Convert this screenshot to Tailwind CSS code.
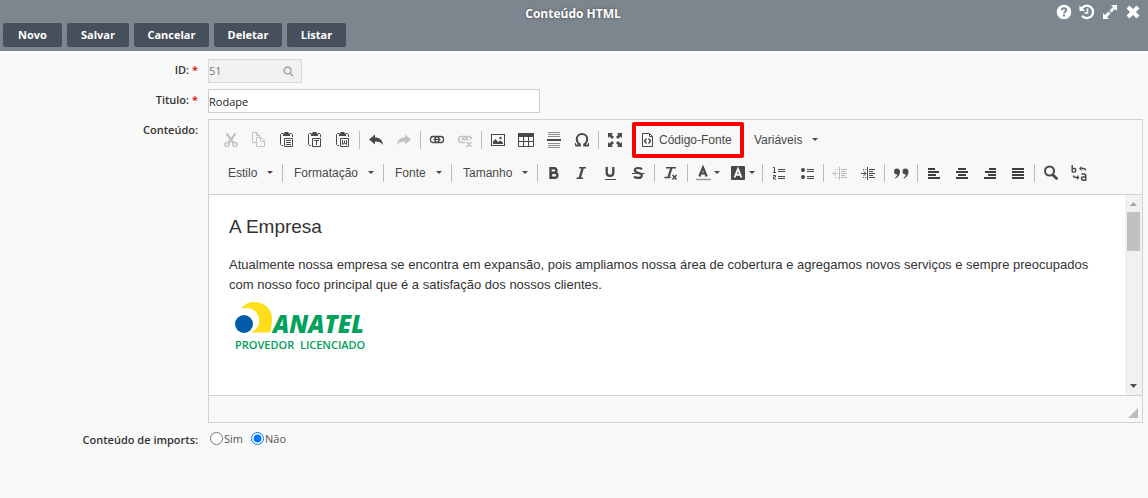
<!DOCTYPE html>
<html lang="pt-BR">
<head>
<meta charset="utf-8">
<meta name="viewport" content="width=device-width, initial-scale=1">
<title>Conteúdo HTML</title>
<script src="https://cdn.jsdelivr.net/npm/@tailwindcss/browser@4"></script>
</head>
<body class="min-h-screen bg-[#f9f9f9] font-['Open_Sans',sans-serif] text-[11px] text-[#333]">
<header class="relative bg-[#7d868f] px-[3px] pb-1">
  <h1 class="flex h-[23px] items-center justify-center pt-1 pr-0.5 text-xs font-bold text-white [text-shadow:0_0_3px_#444]">Conteúdo HTML</h1>
  <div class="absolute top-1 right-[7px] flex gap-[7px] text-white">
    <button type="button" aria-label="Ajuda" class="size-4"><svg viewBox="0 0 16 16" class="size-4"><circle cx="8" cy="8" r="7.300" fill="currentColor"/><path d="M5.800 6.200C5.900 4.800 6.800 4.200 8 4.200s2.300.7 2.300 1.900C10.300 7.700 8.100 7.600 8.100 9.300" fill="none" stroke="#7d868f" stroke-width="1.900"/><path d="M7 10.300h2.100v2H7z" fill="#7d868f"/></svg></button>
    <button type="button" aria-label="Histórico" class="size-4"><svg viewBox="0 0 16 16" class="size-4" fill="none" stroke="currentColor"><path d="M2.600 4.600A6.200 6.200 0 1 1 3 11.800" stroke-width="2.300"/><path d="M.500 1.500v5.500h5.500z" fill="currentColor" stroke="none"/><path d="M8.500 4.500V9H5.500" stroke-width="1.600"/></svg></button>
    <button type="button" aria-label="Expandir" class="size-4"><svg viewBox="0 0 16 16" class="size-4" fill="currentColor"><path d="M9 1h6v6l-2-2-3.500 3.500-2-2L11 3zM1 15V9l2 2 3.500-3.500 2 2L5 13l2 2z"/></svg></button>
    <button type="button" aria-label="Fechar" class="size-4"><svg viewBox="0 0 16 16" class="size-4" fill="none" stroke="currentColor" stroke-width="4"><path d="m3 3 10 10M13 3 3 13"/></svg></button>
  </div>
  <nav class="flex gap-[5px] text-[11px] font-bold text-white">
    <button type="button" class="h-6 w-[59px] rounded-xs bg-[#46505a]">Novo</button>
    <button type="button" class="h-6 w-[62px] rounded-xs bg-[#46505a]">Salvar</button>
    <button type="button" class="h-6 w-[75px] rounded-xs bg-[#46505a]">Cancelar</button>
    <button type="button" class="h-6 w-[68px] rounded-xs bg-[#46505a]">Deletar</button>
    <button type="button" class="h-6 w-[59px] rounded-xs bg-[#46505a]">Listar</button>
  </nav>
</header>

<form class="grid grid-cols-[198px_minmax(0,1fr)] gap-x-2.5 gap-y-1.5 pt-2 pr-[5px]">
  <label for="id" class="pt-[3px] text-right font-semibold">ID: <span class="text-[#e00]">*</span></label>
  <div class="flex h-6 w-[94px] items-center border border-[#d9d9d9] bg-[#f1f1f1] pr-[7px]">
    <input id="id" value="51" readonly class="w-full min-w-0 flex-1 text-[#777]">
    <svg viewBox="0 0 12 12" class="size-[11px] text-[#aaa]" fill="none" stroke="currentColor" stroke-width="1.700"><circle cx="5" cy="5" r="3.800"/><path d="m8 8 3 3"/></svg>
  </div>

  <label for="titulo" class="pt-[3px] text-right font-semibold">Titulo: <span class="text-[#e00]">*</span></label>
  <input id="titulo" value="Rodape" class="h-6 w-[332px] border border-[#ccc] bg-white text-[#222]">

  <div id="conteudo" class="pt-[3px] text-right font-semibold">Conteúdo:</div>
  <section aria-labelledby="conteudo" class="border border-[#d1d1d1] bg-[#f8f8f8] font-['Liberation_Sans',sans-serif]">
    <div class="flex flex-col gap-[5px] border-b border-[#d1d1d1] pt-1.5 pb-[7px] pl-2 text-xs text-[#484848]">
      <div class="flex h-7 items-center">
        <button type="button" aria-label="Recortar" class="flex h-7 w-7 items-center justify-center opacity-30"><svg viewBox="0 0 16 16" class="size-4" fill="none" stroke="currentColor"><path d="m3.500 1.500 7 9.500M12.500 1.500 5.500 11" stroke-width="2.400"/><circle cx="4" cy="12.500" r="2" stroke-width="1.500"/><circle cx="12" cy="12.500" r="2" stroke-width="1.500"/></svg></button>
        <button type="button" aria-label="Copiar" class="flex h-7 w-7 items-center justify-center opacity-30"><svg viewBox="0 0 16 16" class="size-4" fill="none" stroke="currentColor"><path d="M5 10.500H1.500v-10H6l2.500 2.500v2M5.500 5.500H10l3.500 3.500v5.500h-8zM9.500 5.500V9.500h4M5.500.500V3.500h3"/></svg></button>
        <button type="button" aria-label="Colar" class="flex h-7 w-7 items-center justify-center"><svg viewBox="0 0 16 16" class="size-4" fill="none" stroke="currentColor"><path d="M4 1.500H2.500l-1 1v10l1 1H4M11 1.500h1.500l1 1V5M5.500 6.500h8v8h-8z"/><path d="M4 1.500h1.500V0h4v1.500H11V4H4z" fill="currentColor" stroke="none"/><path d="M7 8.500h5M7 10.500h5M7 12.500h5"/></svg></button>
        <button type="button" aria-label="Colar como texto" class="flex h-7 w-7 items-center justify-center"><svg viewBox="0 0 16 16" class="size-4" fill="none" stroke="currentColor"><path d="M4 1.500H2.500l-1 1v10l1 1H4M11 1.500h1.500l1 1V5M5.500 6.500h8v8h-8z"/><path d="M4 1.500h1.500V0h4v1.500H11V4H4z" fill="currentColor" stroke="none"/><path d="M7 8.500h5M9.500 8.500V13"/></svg></button>
        <button type="button" aria-label="Colar do Word" class="flex h-7 w-7 items-center justify-center"><svg viewBox="0 0 16 16" class="size-4" fill="none" stroke="currentColor"><path d="M4 1.500H2.500l-1 1v10l1 1H4M11 1.500h1.500l1 1V5M5.500 6.500h8v8h-8z"/><path d="M4 1.500h1.500V0h4v1.500H11V4H4z" fill="currentColor" stroke="none"/><path d="M7.500 8v4.500l2-1.500 2 1.500V8M9.500 8.500v3"/></svg></button>
        <span class="mx-0.5 h-[18px] w-px bg-[#bcbcbc]"></span>
        <button type="button" aria-label="Desfazer" class="flex h-7 w-7 items-center justify-center"><svg viewBox="0 0 16 16" class="size-4" fill="currentColor"><path d="M7 2.500v3c5 0 7.500 2.500 8 7.500-1.500-2.500-4-3.500-8-3.500v3L1 7.500z"/></svg></button>
        <button type="button" aria-label="Refazer" class="flex h-7 w-7 items-center justify-center opacity-30"><svg viewBox="0 0 16 16" class="size-4" fill="currentColor"><path d="M9 2.500v3c-5 0-7.500 2.500-8 7.500 1.500-2.500 4-3.500 8-3.500v3l6-5z"/></svg></button>
        <span class="mx-0.5 h-[18px] w-px bg-[#bcbcbc]"></span>
        <button type="button" aria-label="Link" class="flex h-7 w-7 items-center justify-center"><svg viewBox="0 0 16 16" class="size-4" fill="none" stroke="currentColor" stroke-width="1.300"><rect x="1.500" y="4.500" width="8.500" height="6" rx="2.500"/><rect x="6" y="4.500" width="8.500" height="6" rx="2.500"/><path d="M4.500 7.500h7"/></svg></button>
        <button type="button" aria-label="Remover link" class="flex h-7 w-7 items-center justify-center opacity-30"><svg viewBox="0 0 16 16" class="size-4" fill="none" stroke="currentColor" stroke-width="1.400"><path d="M8 10.500H4.500a3 3 0 0 1 0-6H7a3 3 0 0 1 3 3M6 7.500a3 3 0 0 1 3-3h2.500a3 3 0 0 1 3 3M4.500 7.500h7M9.500 10l5 5M14.500 10l-5 5"/></svg></button>
        <span class="mx-0.5 h-[18px] w-px bg-[#bcbcbc]"></span>
        <button type="button" aria-label="Imagem" class="flex h-7 w-7 items-center justify-center"><svg viewBox="0 0 16 16" class="size-4" fill="currentColor"><path d="M1 2h14v12H1zM2 3v10h12V3z" fill-rule="evenodd"/><path d="M3 12V9.500L5.500 7l2.500 3 2-1.500 3 2V12z"/><circle cx="10.500" cy="6" r="1.200"/></svg></button>
        <button type="button" aria-label="Tabela" class="flex h-7 w-7 items-center justify-center"><svg viewBox="0 0 16 16" class="size-4" fill="none" stroke="currentColor"><path d="M.500 1.500h15v13H.500zM0 9.500h16M5.500 4v10M10.500 4v10"/><path d="M0 3h16" stroke-width="4"/></svg></button>
        <button type="button" aria-label="Linha horizontal" class="flex h-7 w-7 items-center justify-center"><svg viewBox="0 0 16 16" class="size-4" fill="none" stroke="currentColor"><path d="M2 .500h12M2 2.500h12M2 4.500h12M2 11.500h12M2 13.500h12M2 15.500h12" opacity=".6"/><path d="M1 8h14" stroke-width="2"/></svg></button>
        <button type="button" aria-label="Caractere especial" class="flex h-7 w-7 items-center justify-center"><svg viewBox="0 0 16 16" class="size-4" fill="none" stroke="currentColor" stroke-width="2"><path d="M1.500 13.500h4.300v-1.200C3.600 11 2.800 9.200 2.800 7c0-3 2.200-5 5.200-5s5.200 2 5.200 5c0 2.200-.8 4-3 5.300v1.200h4.300"/><path d="M1.500 11v3M14.500 11v3" stroke-width="1"/></svg></button>
        <span class="mx-0.5 h-[18px] w-px bg-[#bcbcbc]"></span>
        <button type="button" aria-label="Maximizar" class="flex h-7 w-7 items-center justify-center"><svg viewBox="0 0 16 16" class="size-4" fill="currentColor"><path d="M1 1h5L4.500 2.500 7 5 5 7 2.500 4.500 1 6zM15 1v5l-1.500-1.500L11 7 9 5l2.500-2.500L10 1zM1 15v-5l1.500 1.500L5 9l2 2-2.500 2.500L6 15zM15 15h-5l1.500-1.500L9 11l2-2 2.500 2.500L15 10z"/></svg></button>
        <button type="button" class="ml-[3px] flex h-9 w-28 items-center gap-1 rounded-xs border-4 border-[#f00] pl-[3px]"><svg viewBox="0 0 16 16" class="size-4 shrink-0" fill="none" stroke="currentColor"><path d="M3.500 1.500h7l3 3v10h-10zM10.500 1.500v3h3"/><path d="M7.500 6.500 5.500 9l2 2.500M9.500 6.500l2 2.500-2 2.500" stroke-width="1.400"/></svg>Código-Fonte</button>
        <button type="button" class="ml-2.5 flex h-7 items-center gap-2.5">Variáveis<svg viewBox="0 0 6 4" class="h-1 w-1.5" fill="currentColor"><path d="M0 0h6L3 3z"/></svg></button>
      </div>
      <div class="flex h-7 items-center">
        <button type="button" class="flex h-7 w-[63px] items-center justify-between pr-[7px] pl-[11px]">Estilo<svg viewBox="0 0 6 4" class="h-1 w-1.5" fill="currentColor"><path d="M0 0h6L3 3z"/></svg></button>
        <span class="mx-0.5 h-[18px] w-px bg-[#bcbcbc]"></span>
        <button type="button" class="flex h-7 w-24 items-center justify-between pr-[7px] pl-[9px]">Formatação<svg viewBox="0 0 6 4" class="h-1 w-1.5" fill="currentColor"><path d="M0 0h6L3 3z"/></svg></button>
        <span class="mx-0.5 h-[18px] w-px bg-[#bcbcbc]"></span>
        <button type="button" class="flex h-7 w-[63px] items-center justify-between pr-[7px] pl-[9px]">Fonte<svg viewBox="0 0 6 4" class="h-1 w-1.5" fill="currentColor"><path d="M0 0h6L3 3z"/></svg></button>
        <span class="mx-0.5 h-[18px] w-px bg-[#bcbcbc]"></span>
        <button type="button" class="flex h-7 w-[81px] items-center justify-between pr-[7px] pl-[9px]">Tamanho<svg viewBox="0 0 6 4" class="h-1 w-1.5" fill="currentColor"><path d="M0 0h6L3 3z"/></svg></button>
        <span class="mx-0.5 h-[18px] w-px bg-[#bcbcbc]"></span>
        <button type="button" aria-label="Negrito" class="flex h-7 w-7 items-center justify-center"><svg viewBox="0 0 16 16" class="size-4" fill="none" stroke="currentColor" stroke-width="2.400"><path d="M5 3.200h3.200a2.200 2.200 0 0 1 0 4.500H5M5 7.700h3.800a2.500 2.500 0 0 1 0 5.100H5zM4.500 2v12"/></svg></button>
        <button type="button" aria-label="Itálico" class="flex h-7 w-7 items-center justify-center"><svg viewBox="0 0 16 16" class="size-4" fill="none" stroke="currentColor"><path d="M5 2.700h7M2.500 13.300H9" stroke-width="1.400"/><path d="M8.700 3 5.700 13" stroke-width="2.400"/></svg></button>
        <button type="button" aria-label="Sublinhado" class="flex h-7 w-7 items-center justify-center"><svg viewBox="0 0 16 16" class="size-4" fill="none" stroke="currentColor"><path d="M4.700 2v5.500c0 2.300 1.200 3.400 3.300 3.400s3.300-1.100 3.300-3.400V2" stroke-width="2.300"/><path d="M3 14.500h11"/></svg></button>
        <button type="button" aria-label="Tachado" class="flex h-7 w-7 items-center justify-center"><svg viewBox="0 0 16 16" class="size-4" fill="none" stroke="currentColor"><path d="M12 4.200C11 3.300 9.800 3 8.200 3 6 3 4.800 4 4.800 5.300c0 3.200 7 1.900 7 5.100 0 1.500-1.500 2.500-3.700 2.500-1.600 0-3-.4-4.100-1.300" stroke-width="2.200"/><path d="M2 8.500h12.500"/></svg></button>
        <span class="mx-0.5 h-[18px] w-px bg-[#bcbcbc]"></span>
        <button type="button" aria-label="Remover formatação" class="flex h-7 w-7 items-center justify-center"><svg viewBox="0 0 16 16" class="size-4" fill="none" stroke="currentColor"><path d="M3 2.800h10M1.500 12.500h6" stroke-width="1.600"/><path d="M8.500 3 5.500 12" stroke-width="2.300"/><path d="m9.500 10 4 4.500M13.500 10l-4 4.500" stroke-width="1.500"/></svg></button>
        <span class="mx-0.5 h-[18px] w-px bg-[#bcbcbc]"></span>
        <button type="button" aria-label="Cor do texto" class="flex h-7 w-[35px] items-center gap-[3px] pl-[5px]"><svg viewBox="0 0 16 16" class="size-4" fill="none" stroke="currentColor"><path d="M4.300 11.500 8 2.500 11.700 11.500M5.500 8.500h5" stroke-width="2.200"/><path d="M1 14.500h15" stroke-width="1.500" opacity=".55"/></svg><svg viewBox="0 0 6 4" class="h-1 w-1.5" fill="currentColor"><path d="M0 0h6L3 3z"/></svg></button>
        <button type="button" aria-label="Cor do fundo" class="flex h-7 w-[35px] items-center gap-[3px] pl-[5px]"><svg viewBox="0 0 16 16" class="size-4" fill="none" stroke="#f8f8f8"><rect x="1" y="1" width="14" height="14" rx="1" fill="currentColor" stroke="none"/><path d="M4.500 12.500 8 4l3.500 8.500M5.500 9.800h5" stroke-width="1.900"/></svg><svg viewBox="0 0 6 4" class="h-1 w-1.5" fill="currentColor"><path d="M0 0h6L3 3z"/></svg></button>
        <span class="mx-0.5 h-[18px] w-px bg-[#bcbcbc]"></span>
        <button type="button" aria-label="Lista numerada" class="flex h-7 w-7 items-center justify-center"><svg viewBox="0 0 16 16" class="size-4" fill="none" stroke="currentColor"><path d="M7 4.500h7M7 6.500h7M7 11.500h7M7 13.500h7M2 2.500h1.500v4.500M2 7.500h3M2 10.500h2.500v1.500h-2v2H5"/></svg></button>
        <button type="button" aria-label="Lista com marcadores" class="flex h-7 w-7 items-center justify-center"><svg viewBox="0 0 16 16" class="size-4" fill="none" stroke="currentColor"><path d="M8 4.500h7M8 6.500h7M8 11.500h7M8 13.500h7"/><g fill="currentColor" stroke="none"><circle cx="4" cy="5" r="2"/><circle cx="4" cy="12" r="2"/></g></svg></button>
        <span class="mx-0.5 h-[18px] w-px bg-[#bcbcbc]"></span>
        <button type="button" aria-label="Diminuir recuo" class="flex h-7 w-7 items-center justify-center opacity-35"><svg viewBox="0 0 16 16" class="size-4" fill="none" stroke="currentColor"><path d="M7.500 2v13M9 4.500h6M9 6.500h4M9 8.500h6M9 10.500h4M9 12.500h6M1 8.500h5M3.500 6l-2.500 2.500L3.500 11M3 4.500h1M5 4.500h1M3 12.500h1M5 12.500h1"/></svg></button>
        <button type="button" aria-label="Aumentar recuo" class="flex h-7 w-7 items-center justify-center"><svg viewBox="0 0 16 16" class="size-4" fill="none" stroke="currentColor"><path d="M7.500 2v13M9 4.500h6M9 6.500h4M9 8.500h6M9 10.500h4M9 12.500h6M1 8.500h5M3.500 6 6 8.500 3.500 11M3 4.500h1M5 4.500h1M3 12.500h1M5 12.500h1"/></svg></button>
        <span class="mx-0.5 h-[18px] w-px bg-[#bcbcbc]"></span>
        <button type="button" aria-label="Citação" class="flex h-7 w-7 items-center justify-center"><svg viewBox="0 0 16 16" class="size-4" fill="currentColor"><path d="M4 3.500c2 0 3 1.300 3 3.300 0 3-1.800 5.500-4.500 6.700l-.5-.8c1.400-.9 2.200-2 2.300-3.200C2.500 9.700 1 8.500 1 6.500c0-1.800 1.300-3 3-3zM12.500 3.500c2 0 3 1.300 3 3.300 0 3-1.800 5.500-4.500 6.700l-.5-.8c1.400-.9 2.200-2 2.300-3.200-1.800.2-3.300-1-3.300-3 0-1.800 1.300-3 3-3z"/></svg></button>
        <span class="mx-0.5 h-[18px] w-px bg-[#bcbcbc]"></span>
        <button type="button" aria-label="Alinhar à esquerda" class="flex h-7 w-7 items-center justify-center text-black"><svg viewBox="0 0 16 16" class="size-4" fill="none" stroke="currentColor" stroke-width="1.600"><path d="M2 4h7M2 7h11M2 10h8M2 13h12"/></svg></button>
        <button type="button" aria-label="Centralizar" class="flex h-7 w-7 items-center justify-center text-black"><svg viewBox="0 0 16 16" class="size-4" fill="none" stroke="currentColor" stroke-width="1.600"><path d="M4 4h8M2 7h12M4 10h8M2 13h12"/></svg></button>
        <button type="button" aria-label="Alinhar à direita" class="flex h-7 w-7 items-center justify-center text-black"><svg viewBox="0 0 16 16" class="size-4" fill="none" stroke="currentColor" stroke-width="1.600"><path d="M7 4h7M3 7h11M6 10h8M2 13h12"/></svg></button>
        <button type="button" aria-label="Justificar" class="flex h-7 w-7 items-center justify-center text-black"><svg viewBox="0 0 16 16" class="size-4" fill="none" stroke="currentColor" stroke-width="1.600"><path d="M2 4h12M2 7h12M2 10h12M2 13h12"/></svg></button>
        <span class="mx-0.5 h-[18px] w-px bg-[#bcbcbc]"></span>
        <button type="button" aria-label="Localizar" class="flex h-7 w-7 items-center justify-center"><svg viewBox="0 0 16 16" class="size-4" fill="none" stroke="currentColor"><circle cx="6.500" cy="6" r="4.500" stroke-width="2"/><path d="m9.500 9.500 4.800 4.800" stroke-width="2.800"/></svg></button>
        <button type="button" aria-label="Substituir" class="flex h-7 w-7 items-center justify-center"><svg viewBox="0 0 16 16" class="size-4" fill="none" stroke="currentColor" stroke-width="1.400"><path d="M1.200 0v7.300M1.200 3.500h2.200q1.300 0 1.300 1.300v1q0 1.300-1.300 1.300H1.200M10.500 3.500h2q2 0 2 2M2.500 10.500q0 2 2.500 2h1.500"/><path d="M8 3.500 10.500 1v5zM8.500 12.500 6 10v5z" fill="currentColor" stroke="none"/><path d="M10.500 9h2.700q1.500 0 1.500 1.300v4.900H12q-1.500 0-1.500-1.600T12 12h2.500" stroke-width="1.600"/></svg></button>
      </div>
    </div>

    <div class="flex h-[200px] bg-white">
      <article class="flex-1 px-5 pt-[18px] text-[13px] leading-5 text-[#333]">
        <h2 class="mb-3.5 text-[19px] leading-7">A Empresa</h2>
        <p>Atualmente nossa empresa se encontra em expansão, pois ampliamos nossa área de cobertura e agregamos novos serviços e sempre preocupados com nosso foco principal que é a satisfação dos nossos clientes.</p>
        <svg viewBox="0 0 142 58" class="mt-px h-[58px] w-[142px]" role="img" aria-label="Anatel - Provedor Licenciado">
          <path d="M12 13C16 7 22 5.500 27 6c10 1 16 8 16 16 0 6-.5 10-2 14.500H22c6-3 9-8 8-14C29 15 21 10 12 13z" fill="#ffdf1b"/>
          <circle cx="15" cy="28" r="9" fill="#005baa"/>
          <text x="44" y="37" fill="#00a15a" font-family="Open Sans" font-weight="800" font-style="italic" font-size="24">ANATEL</text>
          <text x="6" y="53" fill="#00a15a" font-family="Open Sans" font-weight="600" font-size="11">PROVEDOR&#160; LICENCIADO</text>
        </svg>
      </article>
      <div class="flex w-[17px] flex-col items-center bg-[#f1f1f1]">
        <svg viewBox="0 0 17 17" class="size-[17px]"><path d="m5 11 3.500-4 3.500 4z" fill="#a3a3a3"/></svg>
        <span class="h-[39px] w-[13px] bg-[#c1c1c1]"></span>
        <svg viewBox="0 0 17 17" class="mt-auto size-[17px]"><path d="m5 6 3.500 4L12 6z" fill="#505050"/></svg>
      </div>
    </div>
    <footer class="flex h-[27px] items-end justify-end border-t border-[#d1d1d1] pr-1 pb-1">
      <svg viewBox="0 0 10 10" class="size-2.5"><path d="M10 0v10H0z" fill="#bcbcbc"/></svg>
    </footer>
  </section>

  <div id="imports" class="pt-[3px] text-right font-semibold">Conteúdo de imports:</div>
  <div role="radiogroup" aria-labelledby="imports" class="flex items-center gap-2 pl-0.5 text-[#555]">
    <label class="flex items-center gap-px"><input type="radio" name="imports" class="size-[13px]">Sim</label>
    <label class="flex items-center gap-px"><input type="radio" name="imports" checked class="size-[13px]">Não</label>
  </div>
</form>
</body>
</html>
